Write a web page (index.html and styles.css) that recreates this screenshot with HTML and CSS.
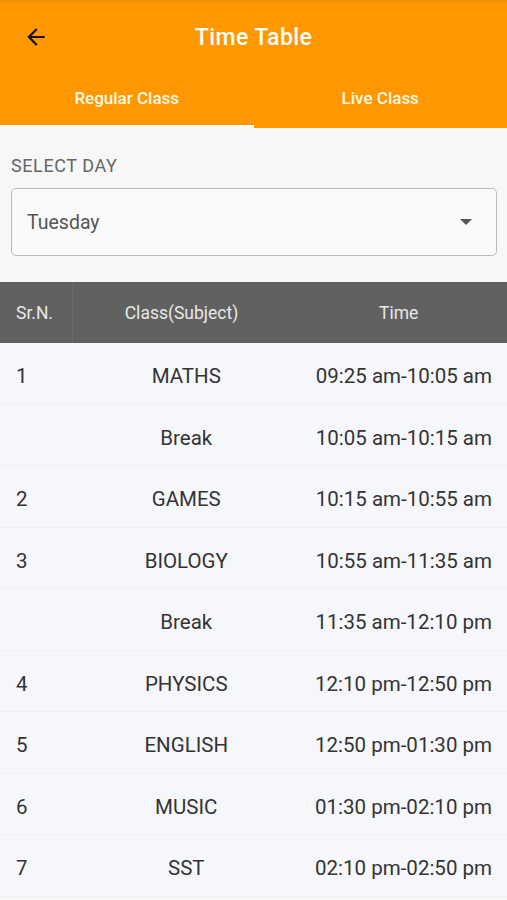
FILE: index.html
```html
<!DOCTYPE html>
<html lang="en">
<head>
    <meta charset="UTF-8">
    <meta name="viewport" content="width=device-width, initial-scale=1.0">
    <title>Time Table</title>
    <link rel="stylesheet" href="styles.css">
</head>
<body>
    <header class="app-bar">
        <div class="toolbar">
            <button class="back-btn" aria-label="Back">
                <svg width="26" height="26" viewBox="0 0 24 24"><path d="M20 11H7.83l5.59-5.59L12 4l-8 8 8 8 1.41-1.41L7.83 13H20v-2z" fill="#111"/></svg>
            </button>
            <h1>Time Table</h1>
        </div>
        <nav class="tabs">
            <div class="tab active">Regular Class</div>
            <div class="tab">Live Class</div>
        </nav>
    </header>

    <main>
        <section class="day-picker">
            <label class="day-label">SELECT DAY</label>
            <div class="select-box">
                <span>Tuesday</span>
                <span class="caret"></span>
            </div>
        </section>

        <table class="timetable">
            <thead>
                <tr>
                    <th class="col-sr">Sr.N.</th>
                    <th class="col-class">Class(Subject)</th>
                    <th class="col-time">Time</th>
                </tr>
            </thead>
            <tbody>
                <tr><td class="col-sr">1</td><td class="col-class">MATHS</td><td class="col-time">09:25 am-10:05 am</td></tr>
                <tr><td class="col-sr"></td><td class="col-class">Break</td><td class="col-time">10:05 am-10:15 am</td></tr>
                <tr><td class="col-sr">2</td><td class="col-class">GAMES</td><td class="col-time">10:15 am-10:55 am</td></tr>
                <tr><td class="col-sr">3</td><td class="col-class">BIOLOGY</td><td class="col-time">10:55 am-11:35 am</td></tr>
                <tr><td class="col-sr"></td><td class="col-class">Break</td><td class="col-time">11:35 am-12:10 pm</td></tr>
                <tr><td class="col-sr">4</td><td class="col-class">PHYSICS</td><td class="col-time">12:10 pm-12:50 pm</td></tr>
                <tr><td class="col-sr">5</td><td class="col-class">ENGLISH</td><td class="col-time">12:50 pm-01:30 pm</td></tr>
                <tr><td class="col-sr">6</td><td class="col-class">MUSIC</td><td class="col-time">01:30 pm-02:10 pm</td></tr>
                <tr><td class="col-sr">7</td><td class="col-class">SST</td><td class="col-time">02:10 pm-02:50 pm</td></tr>
            </tbody>
        </table>
    </main>
</body>
</html>
```

FILE: styles.css
```css
body {
    font-family: Roboto, "Liberation Sans", sans-serif;
    margin: 0;
    padding: 0;
    background-color: #f7f7f7;
    color: #333;
}
.app-bar {
    background-color: #ff9800;
    border-top: 3px solid #f39200;
}
.toolbar {
    height: 67px;
    display: flex;
    align-items: center;
}
.back-btn {
    background: none;
    border: none;
    padding: 0;
    margin-left: 22px;
    width: 28px;
    height: 28px;
    display: flex;
    align-items: center;
    justify-content: center;
    cursor: pointer;
}
.toolbar h1 {
    flex: 1;
    margin: 2px 50px 0 0;
    text-align: center;
    color: #fff;
    font-size: 23px;
    font-weight: 500;
    letter-spacing: 0.4px;
}
.tabs {
    display: flex;
    height: 58px;
}
.tab {
    flex: 1;
    display: flex;
    align-items: center;
    justify-content: center;
    color: #fff8e6;
    font-size: 17px;
    font-weight: 500;
    border-bottom: 3px solid transparent;
    box-sizing: border-box;
}
.tab.active {
    border-bottom-color: #fff;
}
.day-picker {
    padding: 27px 10px 26px 11px;
}
.day-label {
    display: block;
    color: #666;
    font-size: 18px;
    line-height: 21px;
    letter-spacing: 0.6px;
    margin-bottom: 12px;
}
.select-box {
    height: 68px;
    box-sizing: border-box;
    border: 1px solid #bbb;
    border-radius: 5px;
    background-color: #fafafa;
    display: flex;
    align-items: center;
    justify-content: space-between;
    padding: 0 24px 0 15px;
    font-size: 19.5px;
    color: #555;
}
.caret {
    width: 0;
    height: 0;
    border-left: 6px solid transparent;
    border-right: 6px solid transparent;
    border-top: 6px solid #555;
}
.timetable {
    width: 100%;
    border-collapse: collapse;
    table-layout: fixed;
}
.timetable th {
    background-color: #616161;
    color: #e8e8e8;
    font-weight: 400;
    font-size: 17.5px;
    height: 61px;
    padding: 0;
}
.timetable th.col-sr {
    border-right: 1px solid #6a6a6a;
}
.timetable td {
    height: 54.5px;
    padding: 6px 0 0 0;
    font-size: 20.5px;
    color: #333;
    background-color: #f6f7fb;
    border-bottom: 1px solid #eff0f4;
}
.col-sr {
    width: 72px;
    text-align: left;
    padding-left: 16px !important;
    box-sizing: border-box;
}
.col-class {
    width: 218px;
    text-align: center;
}
.col-time {
    text-align: center;
}
.timetable td.col-class {
    padding-left: 10px;
}
.timetable td.col-time {
    text-align: right;
    padding-right: 15px;
}
```
